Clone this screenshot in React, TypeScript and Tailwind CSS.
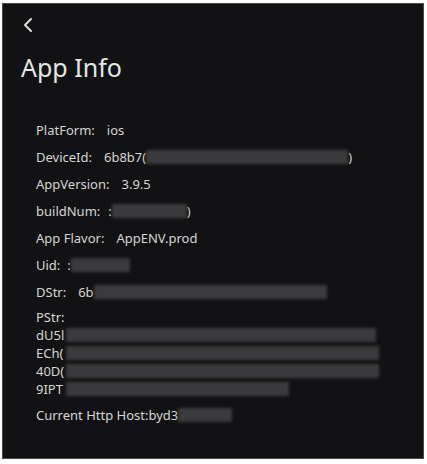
import React from 'react';
import { ChevronLeft } from 'lucide-react';

function Bar({ className }: { className: string }) {
    return <span className={`inline-block h-[14px] bg-[#3b3b3d] blur-[1.5px] align-middle ${className}`} />;
}

function Row({ label, gap = 'ml-[12px]', children }: { label: string; gap?: string; children: React.ReactNode }) {
    return (
        <div className="flex items-center h-[18px] leading-[18px] whitespace-nowrap">
            <span>{label}</span>
            <span className={`${gap} flex items-center`}>{children}</span>
        </div>
    );
}

export default function App() {
    return (
        <div className="min-h-screen bg-white pl-[2px] pt-[3px]" style={{ fontFamily: '"Noto Sans", sans-serif' }}>
            <div className="w-[422px] h-[456px] border border-[#4b4b4b] bg-[#121214] text-[#d6d6d6]">
                <div className="pl-[13px] pt-[9px]">
                    <ChevronLeft size={24} strokeWidth={2} className="text-[#dcdcdc]" />
                </div>

                <h1 className="mt-[18px] pl-[18px] text-[25px] leading-[25px] text-[#e6e6e6]">App Info</h1>

                <div className="mt-[41px] pl-[33px] flex flex-col gap-[9px] text-[13px]">
                    <Row label="PlatForm:">ios</Row>
                    <Row label="DeviceId:">
                        6b8b7(
                        <Bar className="w-[202px]" />
                        )
                    </Row>
                    <Row label="AppVersion:">3.9.5</Row>
                    <Row label="buildNum:" gap="ml-[8px]">
                        :
                        <Bar className="w-[75px]" />
                        )
                    </Row>
                    <Row label="App Flavor:">AppENV.prod</Row>
                    <Row label="Uid:" gap="ml-[7px]">
                        :
                        <Bar className="w-[59px]" />
                    </Row>
                    <Row label="DStr:">
                        6b
                        <Bar className="w-[233px]" />
                    </Row>

                    <div className="-mt-[2px] leading-[18px] whitespace-nowrap">
                        <div>PStr:</div>
                        <div className="flex items-center h-[18px]">
                            <span className="w-[30px]">dU5l</span>
                            <Bar className="w-[310px]" />
                        </div>
                        <div className="flex items-center h-[18px]">
                            <span className="w-[30px]">ECh(</span>
                            <Bar className="w-[313px]" />
                        </div>
                        <div className="flex items-center h-[18px]">
                            <span className="w-[30px]">40D(</span>
                            <Bar className="w-[313px]" />
                        </div>
                        <div className="flex items-center h-[18px]">
                            <span className="w-[30px]">9IPT</span>
                            <Bar className="w-[223px]" />
                        </div>
                    </div>

                    <div className="-mt-[1px] flex items-center h-[18px] leading-[18px] whitespace-nowrap">
                        Current Http Host:byd3
                        <Bar className="w-[54px]" />
                    </div>
                </div>
            </div>
        </div>
    );
}
